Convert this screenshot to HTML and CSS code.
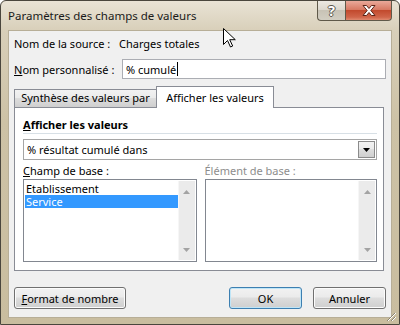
FILE: index.html
```html
<html>
<head>
<title>Paramètres des champs de valeurs</title>
<link rel="stylesheet" href="styles.css">
</head>
<body>

<div class="window">
  <div class="titlebar">
    <span class="title">Paramètres des champs de valeurs</span>
    <div class="caption">
      <span class="cap-btn help">?</span>
      <span class="cap-btn close">
        <svg width="14" height="11" viewBox="0 0 14 11"><path d="M1 0.5h3.5l2.5 3 2.5-3h3.5l-4.2 5 4.2 5h-3.5l-2.5-3-2.5 3h-3.5l4.2-5z" fill="#fff" stroke="#5b2418" stroke-width="1"/></svg>
      </span>
    </div>
  </div>

  <div class="client">
    <div class="row source">
      <span class="lbl">Nom de la source :</span>
      <span>Charges totales</span>
    </div>
    <div class="row custom">
      <span class="lbl"><u>N</u>om personnalisé :</span>
      <div class="textbox">% cumulé<span class="caret"></span></div>
    </div>

    <div class="tabs">
      <div class="tab">Synthèse des valeurs par</div>
      <div class="tab active">Afficher les valeurs</div>
    </div>
    <div class="panel">
      <div class="group-title"><u>A</u>fficher les valeurs</div>
      <div class="combo">
        <span class="combo-text">% résultat cumulé dans</span>
        <span class="drop"><svg width="7" height="4" viewBox="0 0 7 4"><path d="M0 0h7l-3.5 4z" fill="#000"/></svg></span>
      </div>
      <div class="lists">
        <div class="list-col first">
          <div class="list-label"><u>C</u>hamp de base :</div>
          <div class="listbox">
            <div class="items">
              <div class="item">Etablissement</div>
              <div class="item selected">Service</div>
            </div>
            <div class="scrollbar">
              <svg width="7" height="4" viewBox="0 0 7 4"><path d="M0 4h7l-3.5-4z" fill="#a3a3a3"/></svg>
              <svg width="7" height="4" viewBox="0 0 7 4"><path d="M0 0h7l-3.5 4z" fill="#a3a3a3"/></svg>
            </div>
          </div>
        </div>
        <div class="list-col second">
          <div class="list-label disabled">Élément de base :</div>
          <div class="listbox">
            <div class="items"></div>
            <div class="scrollbar">
              <svg width="7" height="4" viewBox="0 0 7 4"><path d="M0 4h7l-3.5-4z" fill="#a3a3a3"/></svg>
              <svg width="7" height="4" viewBox="0 0 7 4"><path d="M0 0h7l-3.5 4z" fill="#a3a3a3"/></svg>
            </div>
          </div>
        </div>
      </div>
    </div>

    <div class="buttons">
      <button class="btn format"><u>F</u>ormat de nombre</button>
      <button class="btn default">OK</button>
      <button class="btn">Annuler</button>
    </div>
  </div>

  <svg class="grip" width="12" height="12" viewBox="0 0 12 12">
    <path d="M11 3L3 11M11 7L7 11M11 11L11 11" stroke="#fff" stroke-width="1"/>
    <path d="M10 3L2 11M10 7L6 11" stroke="#8a8371" stroke-width="1"/>
  </svg>

  <svg class="cursor" width="13" height="20" viewBox="0 0 13 20">
    <path d="M0.5 0.5v16l4-4 3 6.5 2.2-1-3-6.3h5.6z" fill="#fff" stroke="#000" stroke-width="1" stroke-linejoin="miter"/>
  </svg>
</div>

</body>
</html>
```

FILE: styles.css
```css
body {
  margin: 0;
  background: #fff;
  font-family: "Noto Sans", "Open Sans", sans-serif;
  font-size: 11px;
  color: #000;
}

.window {
  position: relative;
  width: 400px;
  height: 325px;
  box-sizing: border-box;
  border: 1px solid #4a463d;
  border-radius: 6px 6px 0 0;
  background: linear-gradient(#e9e3d5, #d8cfb9 30px, #cdc2a6 120px, #c9bd9f);
  overflow: hidden;
}

.titlebar {
  display: flex;
  height: 29px;
}

.title {
  padding: 7px 0 0 7px;
  font-size: 11.5px;
  color: #1a1a1a;
}

.caption {
  display: flex;
  margin-left: auto;
  margin-right: 7px;
  height: 20px;
}

.cap-btn {
  display: flex;
  align-items: center;
  justify-content: center;
  box-sizing: border-box;
  height: 20px;
  border: 1px solid #5f5949;
  border-top: none;
}

.help {
  width: 28px;
  border-right: none;
  border-radius: 0 0 0 4px;
  background: linear-gradient(#ece9e2, #dcd8ce 45%, #c8c3b6 50%, #d2cec2);
  color: #fff;
  font-weight: bold;
  font-size: 14px;
  text-shadow: 1px 0 #5b574d, -1px 0 #5b574d, 0 1px #5b574d, 0 -1px #5b574d;
}

.close {
  width: 47px;
  border-radius: 0 0 4px 0;
  background: linear-gradient(#e9a99a, #d77a64 45%, #c24a2e 50%, #d0654a 85%, #e08a70);
}

.client {
  position: relative;
  box-sizing: border-box;
  height: 288px;
  margin: 0 7px;
  padding: 2px 5px 0 5px;
  border: 1px solid #b7ae97;
  background: #f0f0f0;
}

.row {
  display: flex;
  align-items: center;
  height: 20px;
}

.source .lbl {
  width: 105px;
}

.custom {
  margin-top: 6px;
}

.custom .lbl {
  width: 108px;
}

.textbox {
  flex: 1;
  display: flex;
  align-items: center;
  box-sizing: border-box;
  height: 20px;
  padding-left: 3px;
  border: 1px solid #abadb3;
  background: #fff;
}

.caret {
  width: 1px;
  height: 14px;
  margin-left: 1px;
  background: #000;
}

.tabs {
  display: flex;
  align-items: flex-end;
  height: 21px;
  margin-top: 7px;
  margin-right: 2px;
}

.tab {
  box-sizing: border-box;
  height: 18px;
  line-height: 16px;
  text-align: center;
  border: 1px solid #898c95;
  border-bottom: none;
  background: linear-gradient(#f2f2f2, #ebebeb 45%, #dddddd 50%, #cfcfcf);
}

.tab:first-child {
  width: 142px;
  border-right: none;
}

.tab.active {
  position: relative;
  z-index: 1;
  width: 118px;
  height: 22px;
  line-height: 22px;
  margin-bottom: -1px;
  background: #fff;
}

.panel {
  box-sizing: border-box;
  height: 164px;
  margin-right: 2px;
  padding: 8px 6px 0 8px;
  border: 1px solid #898c95;
  background: #fff;
}

.group-title {
  line-height: 17px;
  font-weight: bold;
  border-bottom: 1px solid #d8e0e6;
}

.combo {
  display: flex;
  align-items: center;
  box-sizing: border-box;
  height: 21px;
  margin-top: 5px;
  padding: 1px;
  border: 1px solid #a5a5a5;
  background: #fff;
}

.combo-text {
  flex: 1;
  padding-left: 2px;
}

.drop {
  display: flex;
  align-items: center;
  justify-content: center;
  box-sizing: border-box;
  width: 17px;
  height: 17px;
  border: 1px solid #8b8b8b;
  background: linear-gradient(#f2f2f2, #ebebeb 45%, #dddddd 50%, #cfcfcf);
}

.lists {
  display: flex;
  gap: 8px;
  margin-top: 3px;
}

.list-col.first {
  width: 174px;
}

.list-col.second {
  width: 173px;
}

.list-label {
  height: 16px;
  line-height: 16px;
}

.list-label.disabled {
  color: #8d8d8d;
}

.listbox {
  display: flex;
  box-sizing: border-box;
  height: 83px;
  padding: 1px;
  border: 1px solid #828790;
  background: #fff;
}

.items {
  flex: 1;
  padding-top: 1px;
}

.item {
  height: 13px;
  line-height: 13px;
  padding-left: 1px;
}

.item.selected {
  background: #3399ff;
  color: #fff;
}

.scrollbar {
  display: flex;
  flex-direction: column;
  align-items: center;
  justify-content: space-between;
  box-sizing: border-box;
  width: 17px;
  padding: 9px 0 8px;
  border-left: 1px solid #f6f6f6;
  background: #ebebeb;
}

.buttons {
  display: flex;
  margin-top: 16px;
}

.btn {
  box-sizing: border-box;
  width: 73px;
  height: 22px;
  padding: 0;
  font-family: "Noto Sans", "Open Sans", sans-serif;
  font-size: 11px;
  color: #000;
  border: 1px solid #707070;
  border-radius: 3px;
  background: linear-gradient(#f2f2f2, #ebebeb 45%, #dddddd 50%, #cfcfcf);
  box-shadow: inset 0 0 0 1px #fcfcfc;
}

.btn.format {
  width: 112px;
  margin-right: auto;
}

.btn.default {
  margin-right: 11px;
  border-color: #3c7fb1;
  box-shadow: inset 0 0 0 1px #bfe5f7;
}

.grip {
  position: absolute;
  right: 2px;
  bottom: 2px;
}

.cursor {
  position: absolute;
  left: 222px;
  top: 27px;
}
```
